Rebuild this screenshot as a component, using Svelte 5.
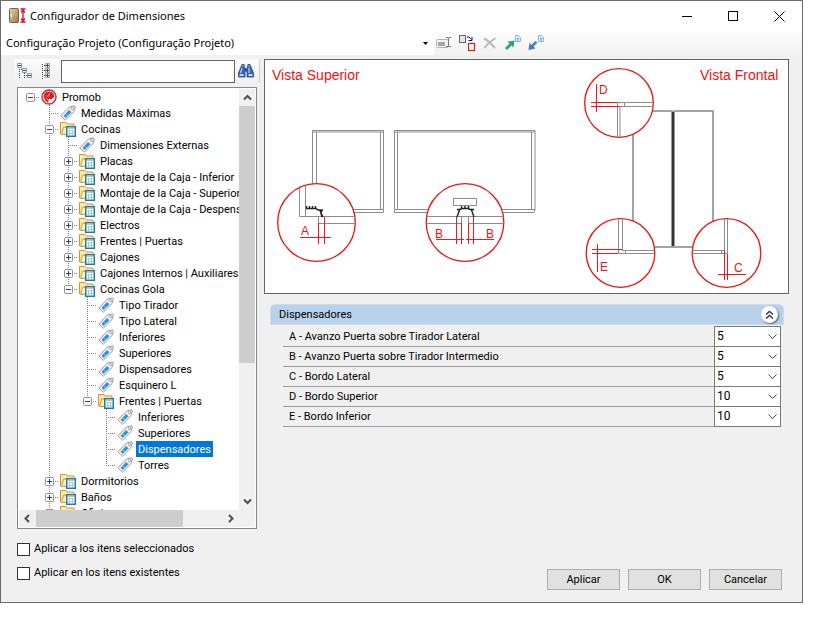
<script>
  const leaf = (name) => ({ name });
  const closed = (name) => ({ name, open: false, children: [] });

  let tree = $state([
    {
      name: 'Promob',
      open: true,
      children: [
        leaf('Medidas Máximas'),
        {
          name: 'Cocinas',
          open: true,
          children: [
            leaf('Dimensiones Externas'),
            closed('Placas'),
            closed('Montaje de la Caja - Inferior'),
            closed('Montaje de la Caja - Superior'),
            closed('Montaje de la Caja - Despens'),
            closed('Electros'),
            closed('Frentes | Puertas'),
            closed('Cajones'),
            closed('Cajones Internos | Auxiliares'),
            {
              name: 'Cocinas Gola',
              open: true,
              children: [
                leaf('Tipo Tirador'),
                leaf('Tipo Lateral'),
                leaf('Inferiores'),
                leaf('Superiores'),
                leaf('Dispensadores'),
                leaf('Esquinero L'),
                {
                  name: 'Frentes | Puertas',
                  open: true,
                  children: [
                    leaf('Inferiores'),
                    leaf('Superiores'),
                    { name: 'Dispensadores', selected: true },
                    leaf('Torres')
                  ]
                }
              ]
            }
          ]
        },
        closed('Dormitorios'),
        closed('Baños'),
        closed('Oficina')
      ]
    }
  ]);

  let fields = $state([
    { label: 'A - Avanzo Puerta sobre Tirador Lateral', value: '5' },
    { label: 'B - Avanzo Puerta sobre Tirador Intermedio', value: '5' },
    { label: 'C - Bordo Lateral', value: '5' },
    { label: 'D - Bordo Superior', value: '10' },
    { label: 'E - Bordo Inferior', value: '10' }
  ]);

  let expanded = $state(true);

  // One entry per visible row, with the guide cells drawn before its icon
  function flatten(nodes, guides = [], depth = 0) {
    return nodes.flatMap((node, i) => {
      const last = i === nodes.length - 1;
      const own = depth === 0 ? 'root' : last ? 'end' : 'tee';
      const row = { node, depth, guides, own };
      if (!node.children || !node.open) return [row];
      const next = [...guides, depth === 0 || last ? 'blank' : 'line'];
      return [row, ...flatten(node.children, next, depth + 1)];
    });
  }

  const rows = $derived(flatten(tree));
</script>

{#snippet chevron(d)}
  <svg class="chevron" width="9" height="9" viewBox="0 0 9 9" aria-hidden="true"><path {d} /></svg>
{/snippet}

{#snippet nodeIcon(row)}
  <svg class="node-icon" width="16" height="16" viewBox="0 0 16 16" aria-hidden="true">
    {#if row.depth === 0}
      <circle cx="8" cy="8" r="7" fill="#fff" stroke="#d3222c" stroke-width="1.4" />
      <path d="M7 2.500C3.500 3 2 6 3 9c.6 2.300 2.300 4 4.500 4.500V10h2c3 0 4-1.700 3.500-4C12.500 3.500 10 2 7 2.500z" fill="#d3222c" />
      <path d="M8 4v3M5.500 7H8M5 9.500l2 1" stroke="#f4a8ab" stroke-width=".8" fill="none" />
    {:else if row.node.children}
      <path d="M.5 13V1.500h5.500l1 1.500h7v3" fill="#fce9ac" stroke="#cf9434" />
      <path d="M1.500 13.500l2-7.500h11v7.500z" fill="#ffd772" stroke="#d39b3f" />
      <path d="M2.500 12.500l1.500-5.500h3v5.500z" fill="#fff1c4" />
      <rect x="6.750" y="5.750" width="8.500" height="9.500" fill="#fff" stroke="#147cb8" stroke-width="1.500" />
      <path d="M8 7.500h6" stroke="#f4b860" />
      <path d="M8.500 9.500h5M8.500 12.500h5M9.500 9v5M12.500 9v5" stroke="#9cc6e8" />
    {:else}
      <path d="M.8 10.800L9.500 2l4.800-1.200c.7 0 1 .4 1 1L14 6.700 5.300 15.200z" fill="#f4f4f4" stroke="#9a9a9a" />
      <path d="M3.500 10.800L9 5l2.500 2.300-5.800 5.700z" fill="#3391d4" />
      <path d="M5.500 9l2.500 2" stroke="#a7d5f3" stroke-width=".8" />
      <circle cx="12.500" cy="3.500" r="1.200" fill="#fff" stroke="#888" stroke-width=".8" />
    {/if}
  </svg>
{/snippet}

<div class="window">
  <header class="title-bar">
    <svg width="17" height="16" viewBox="0 0 17 16" aria-hidden="true">
      <defs>
        <linearGradient id="wood" x1="0" x2="1" y1="0" y2="1">
          <stop offset="0" stop-color="#e8d3b2" />
          <stop offset="1" stop-color="#9c7648" />
        </linearGradient>
      </defs>
      <rect x=".5" y=".5" width="9" height="14" rx="1" fill="url(#wood)" stroke="#80603c" />
      <path d="M2.500 6v3" stroke="#fff" />
      <path d="M11.500 1h5M11.500 14h5M14 2v11M12 4.500l2-2.500 2 2.500M12 10.500l2 2.500 2-2.500" fill="none" stroke="#d9122a" stroke-width="1.300" />
    </svg>
    <h1>Configurador de Dimensiones</h1>
    <div class="window-controls">
      <button aria-label="Minimizar"><svg width="11" height="11" viewBox="0 0 11 11"><path d="M0 5.500h10" /></svg></button>
      <button aria-label="Maximizar"><svg width="11" height="11" viewBox="0 0 11 11"><rect x=".5" y=".5" width="9" height="9" /></svg></button>
      <button aria-label="Cerrar"><svg width="11" height="11" viewBox="0 0 11 11"><path d="M.5.5l10 10M10.500.5l-10 10" /></svg></button>
    </div>
  </header>

  <div class="tool-bar">
    <div class="project">
      <select aria-label="Proyecto">
        <option>Configuração Projeto (Configuração Projeto)</option>
      </select>
      <svg width="5" height="3" viewBox="0 0 5 3" aria-hidden="true"><path d="M0 0h5L2.500 3z" /></svg>
    </div>
    <button aria-label="Renombrar">
      <svg width="16" height="16" viewBox="0 0 16 16">
        <rect x=".5" y="4.500" width="12" height="8" rx="1" fill="#f2f2f2" stroke="#b4b4b4" />
        <rect x="2" y="7" width="7" height="4" fill="#a6a6a6" />
        <path d="M10 2.500h2l.5.5.5-.5h2M12.500 3v8M10 11.500h2l.5-.5.5.5h2" fill="none" stroke="#777" />
      </svg>
    </button>
    <button aria-label="Duplicar">
      <svg width="16" height="16" viewBox="0 0 16 16">
        <rect x=".5" y=".5" width="6" height="7" fill="#e4e4ec" stroke="#6f5f66" />
        <path d="M8 2h2l2.500 2.500M13 2v3.500H9.500" fill="none" stroke="#10107c" />
        <rect x="9.500" y="8.500" width="6" height="7" fill="#eee" stroke="#e80c0c" />
      </svg>
    </button>
    <button aria-label="Eliminar">
      <svg width="16" height="16" viewBox="0 0 16 16">
        <path d="M2 3.500c4 2 8 6 11 9.500M13.500 3C9 6 5 9 2.500 13" fill="none" stroke="#b9b9b9" stroke-width="2" />
      </svg>
    </button>
    <button aria-label="Exportar">
      <svg width="16" height="16" viewBox="0 0 16 16">
        <path d="M0 13l4.500-4.500L2.500 6.500l7-1-1 7-2-2L2 15z" fill="#2da57b" />
        <path d="M10.500.5h3l2 2v4h-5z" fill="#e9f3ff" stroke="#8bb4e0" />
        <path d="M12 3.500h2M12 5h2" stroke="#5c93ce" />
      </svg>
    </button>
    <button aria-label="Importar">
      <svg width="16" height="16" viewBox="0 0 16 16">
        <path d="M9.500 7.500L5.500 11.500l2 2-7 1.500 1-7 2 2 4-4z" fill="#3c7dcb" />
        <path d="M10.500.5h3l2 2v4h-5z" fill="#e9f3ff" stroke="#8bb4e0" />
        <path d="M12 3.500h2M12 5h2" stroke="#5c93ce" />
      </svg>
    </button>
  </div>

  <main>
    <aside>
      <div class="search-bar">
        <button aria-label="Expandir todo">
          <svg width="16" height="16" viewBox="0 0 16 16">
            <path d="M2.500 6v10M7.500 10v6M4 6.500h2M9 12.500h1" stroke="#444" stroke-dasharray="1 1" />
            <path d="M.5.5h4v4h-4zM5.500 5.500h4v4h-4zM10.500 10.500h4v4h-4z" fill="#fff" stroke="#8798ad" />
            <path d="M1 2.500h3M6 7.500h3M11 12.500h3" stroke="#33435c" />
          </svg>
        </button>
        <button aria-label="Contraer todo">
          <svg width="16" height="16" viewBox="0 0 16 16">
            <path d="M4.500 1v15M6 2.500h1M6 7.500h1M6 12.500h1" stroke="#444" stroke-dasharray="1 1" />
            <path d="M7.500.5h4v4h-4zM7.500 5.500h4v4h-4zM7.500 10.500h4v4h-4z" fill="#fff" stroke="#a2a2a2" />
            <path d="M8 2.500h3M8 7.500h3M8 12.500h3M9.500 1v3M9.500 6v3M9.500 11v3" stroke="#444" />
          </svg>
        </button>
        <input type="text" aria-label="Buscar" />
        <button aria-label="Buscar siguiente">
          <svg width="16" height="14" viewBox="0 0 16 14">
            <path d="M4 .5h2l.5 2 .5 2v8.500H.5V9L3 3zM12 .5h-2l-.5 2-.5 2v8.500h6.500V9L13 3z" fill="#3766b2" stroke="#22468c" stroke-width=".8" />
            <path d="M7 4.500h2v3H7z" fill="#22468c" />
            <path d="M4 4L2.500 9M11 4v5M4 2h1.500M10.500 2H12" stroke="#b8d0f2" stroke-width="1.200" fill="none" />
            <path d="M1.500 11.200h4M10.500 11.200h4" stroke="#dce8fa" stroke-width="1.800" />
          </svg>
        </button>
      </div>

      <div class="tree">
        <ul>
          {#each rows as row}
            <li>
              {#each row.guides as guide}
                <span class="guide {guide}"></span>
              {/each}
              <span class="guide {row.own}">
                {#if row.node.children}
                  <button
                    class="expander"
                    aria-label={row.node.open ? 'Contraer' : 'Expandir'}
                    onclick={() => (row.node.open = !row.node.open)}
                  >
                    <svg width="9" height="9" viewBox="0 0 9 9">
                      <rect x=".5" y=".5" width="8" height="8" rx="1" />
                      <path d={row.node.open ? 'M2 4.500h5' : 'M2 4.500h5M4.500 2v5'} />
                    </svg>
                  </button>
                {/if}
              </span>
              {@render nodeIcon(row)}
              <span class="label" class:selected={row.node.selected}>{row.node.name}</span>
            </li>
          {/each}
        </ul>
        <div class="scroll vertical">
          <span class="arrow">{@render chevron('M1 6.500l3.500-3.500L8 6.500')}</span>
          <span class="thumb"></span>
          <span class="arrow">{@render chevron('M1 2.500l3.500 3.500L8 2.500')}</span>
        </div>
        <div class="scroll horizontal">
          <span class="arrow">{@render chevron('M6 1l-3.500 3.500L6 8')}</span>
          <span class="thumb"></span>
          <span class="arrow">{@render chevron('M3 1l3.500 3.500L3 8')}</span>
        </div>
      </div>

      <div class="options">
        <label><input type="checkbox" />Aplicar a los itens seleccionados</label>
        <label><input type="checkbox" />Aplicar en los itens existentes</label>
      </div>
    </aside>

    <section class="content">
      <div class="preview">
        <svg viewBox="265 60 523 233">
          <text class="view-name" x="272" y="80">Vista Superior</text>
          <text class="view-name" x="700" y="80">Vista Frontal</text>

          <!-- cabinets from above -->
          <g class="board">
            <path d="M312.500 209V130.500h71v79M313 132h70M316.500 132v78M380.500 132v78M316 209.500h67.500v3H316" />
            <path d="M394.500 209.500V130.500h140.500v79M395 132h140M397.500 132v78M531.500 132v78M394.500 209.500h140.500l-1 3H394.500z" />
          </g>

          <circle cx="316.500" cy="222.500" r="38.800" />
          <g class="board">
            <path d="M299.500 188v28.500h55.500M305.500 186v30M318.500 217v6.500h36.500" />
          </g>
          <path class="profile" d="M306 208.500h10l2 1.500h5M320 210l2 7M306.500 206v2M309.500 206v2M312.500 206v2M315.500 206v2M322 210l-1 3 2 4" />
          <path class="measure" d="M318.500 223v21M324.500 217v27M300 237.500h31" />
          <text x="301" y="235">A</text>

          <circle cx="465" cy="222.500" r="38.800" />
          <g class="board">
            <path d="M453.500 198.500h23v7h-23zM426.500 216.500h77M426.500 223.500h35v-7M503.500 223.500h-35v-7" />
          </g>
          <path class="profile" d="M457 209.500h3l2-1h6l2 1h4M459.500 210l-2.500 7M471.500 210l2.500 7M461.500 206v2M465 206v2M468.500 206v2" />
          <path class="measure" d="M456.500 217v27M461.500 223v21M468.500 223v21M473.500 217v27M436 239.500h28M466 239.500h28" />
          <text x="435" y="238">B</text>
          <text x="486" y="238">B</text>

          <!-- cabinet from the front -->
          <path class="edge" d="M633 111h40M674 111h40M633 110v137M713 110v137M633 247h80" />
          <path d="M673 111v135" stroke="#999" stroke-width="4" />
          <path d="M673 112v134" stroke="#333" stroke-width="2" />

          <circle cx="619" cy="103" r="34.300" />
          <g class="board">
            <path d="M653 102.500h-35.500v35M653 106.500h-33v31M624.500 102.500v4" />
          </g>
          <path class="measure" d="M591 102.500h26M591 106.500h29M596.500 84v28" />
          <text x="599" y="94">D</text>

          <circle cx="620.500" cy="253" r="34.300" />
          <g class="board">
            <path d="M618.500 219v34.500h36M622.500 219v31.500h32M625.500 250.500v3" />
          </g>
          <path class="measure" d="M592 249.500h30M592 253.500h26M597.500 244v28" />
          <text x="600" y="271">E</text>

          <circle cx="726.500" cy="253" r="34.300" />
          <g class="board">
            <path d="M727.500 219v34.500h-35M724.500 219v31.500h-32M721.500 250.500v3" />
          </g>
          <path class="measure" d="M724.500 250v30M727.500 254v26M718 274.500h28" />
          <text x="734" y="272">C</text>
        </svg>
      </div>

      <div class="group">
        <div class="group-header">
          <h2>Dispensadores</h2>
          <button aria-label="Mostrar u ocultar" onclick={() => (expanded = !expanded)}>
            <svg width="9" height="9" viewBox="0 0 9 9"><path d="M1 4.500l3.500-3 3.500 3M1 8.500l3.500-3 3.500 3" /></svg>
          </button>
        </div>
        {#if expanded}
          <div class="fields">
            {#each fields as field, i}
              <div class="field">
                <label for="field-{i}">{field.label}</label>
                <div class="value">
                  <select id="field-{i}" bind:value={field.value}>
                    <option>5</option>
                    <option>10</option>
                  </select>
                  <svg width="9" height="5" viewBox="0 0 9 5" aria-hidden="true"><path d="M.5.5l4 4 4-4" /></svg>
                </div>
              </div>
            {/each}
          </div>
        {/if}
      </div>

      <footer>
        <button>Aplicar</button>
        <button>OK</button>
        <button>Cancelar</button>
      </footer>
    </section>
  </main>
</div>

<style>
  :global(body) {
    background: #fff;
  }

  * {
    box-sizing: border-box;
  }

  .window {
    display: flex;
    flex-direction: column;
    height: calc(100vh - 21px);
    margin-right: 17px;
    border: 1px solid #6b6b6b;
    background: #f0f0f0;
    color: #000;
    font: 11px/16px Roboto, 'Liberation Sans', sans-serif;
  }

  button,
  input,
  select {
    margin: 0;
    padding: 0;
    border: 0;
    border-radius: 0;
    background: none;
    color: inherit;
    font: inherit;
  }

  select {
    appearance: none;
  }

  h1,
  h2 {
    margin: 0;
    font-size: inherit;
    font-weight: 400;
  }

  svg {
    display: block;
    flex: none;
  }

  .title-bar {
    display: flex;
    align-items: center;
    flex: none;
    gap: 4px;
    height: 30px;
    padding-left: 8px;
    background: #fff;
  }

  .title-bar h1 {
    flex: 1;
    font-family: 'Noto Sans', 'Open Sans', sans-serif;
    font-size: 11px;
  }

  .window-controls {
    display: flex;
  }

  .window-controls button {
    display: grid;
    place-items: center;
    width: 46px;
    height: 30px;
  }

  .window-controls svg {
    fill: none;
    stroke: #000;
  }

  .tool-bar {
    display: flex;
    align-items: center;
    flex: none;
    gap: 7px;
    height: 24px;
    background: linear-gradient(#fdfdfd, #f1f1f1);
  }

  .tool-bar button {
    width: 16px;
    height: 16px;
  }

  .project {
    display: grid;
    align-items: center;
    align-self: stretch;
    width: 54%;
    margin-right: -5px;
    background: #fff;
  }

  .project select,
  .project svg {
    grid-area: 1 / 1;
  }

  .project select {
    width: 100%;
    height: 24px;
    padding-left: 5px;
    font-family: 'Noto Sans', 'Open Sans', sans-serif;
    font-size: 11px;
  }

  .project svg {
    justify-self: end;
    margin-right: 6px;
    pointer-events: none;
  }

  main {
    display: flex;
    flex: 1;
    gap: 4px;
    min-height: 0;
    padding: 4px 13px 12px 13px;
  }

  aside {
    display: flex;
    flex-direction: column;
    flex: none;
    width: 246px;
  }

  .search-bar {
    display: flex;
    align-items: center;
    flex: none;
    height: 24px;
    padding: 0 5px 0 3px;
    border-right: 1px solid #cfcfcf;
    border-radius: 2px;
    background: linear-gradient(#fbfbfb, #f0f0f0);
  }

  .search-bar button {
    width: 16px;
    height: 16px;
  }

  .search-bar button + button {
    margin-left: 5px;
  }

  .search-bar input {
    flex: 1;
    min-width: 0;
    height: 23px;
    margin: 0 3px 0 7px;
    padding: 0 4px;
    border: 1px solid #5f5f5f;
    background: #fff;
  }

  .tree {
    display: grid;
    grid-template-columns: minmax(0, 1fr) 16px;
    grid-template-rows: minmax(0, 1fr) 17px;
    flex: 1;
    min-height: 0;
    margin: 4px 3px 0;
    padding: 1px;
    border: 1px solid #828790;
    background: #fff;
  }

  .tree ul {
    overflow: hidden;
    margin: 0;
    padding: 0 0 0 2px;
    list-style: none;
  }

  .tree li {
    display: flex;
    height: 16px;
    white-space: nowrap;
  }

  .guide {
    flex: none;
    width: 19px;
    height: 16px;
    padding: 4px 5px;
    background-repeat: no-repeat;
  }

  .line,
  .tee,
  .end,
  .root {
    --down: repeating-linear-gradient(#808080 0 1px, transparent 1px 2px);
    --across: repeating-linear-gradient(90deg, #808080 0 1px, transparent 1px 2px);
  }

  .line {
    background-image: var(--down);
    background-position: 9px 0;
    background-size: 1px 16px;
  }

  .tee,
  .end {
    background-image: var(--down), var(--across);
    background-position: 9px 0, 9px 8px;
    background-size: 1px 16px, 10px 1px;
  }

  .end {
    background-size: 1px 8px, 10px 1px;
  }

  .root {
    background-image: var(--across);
    background-position: 9px 8px;
    background-size: 10px 1px;
  }

  .expander {
    display: block;
    width: 9px;
    height: 9px;
  }

  .expander rect {
    fill: #fafafa;
    stroke: #919191;
  }

  .expander path {
    stroke: #2b3f8c;
  }

  .node-icon {
    margin: 0 3px 0 1px;
  }

  .label {
    padding: 0 2px;
    line-height: 18px;
  }

  .label.selected {
    background: #0078d7;
    color: #fff;
  }

  .scroll {
    display: flex;
    background: #f0f0f0;
  }

  .vertical {
    flex-direction: column;
  }

  .horizontal {
    grid-column: 1 / -1;
    padding-right: 16px;
  }

  .arrow {
    display: grid;
    place-items: center;
    flex: none;
    width: 17px;
    height: 17px;
  }

  .vertical .arrow {
    width: 16px;
  }

  .arrow:last-child {
    margin-top: auto;
  }

  .horizontal .arrow:last-child {
    margin: 0 0 0 auto;
  }

  .thumb {
    background: #cdcdcd;
  }

  .vertical .thumb {
    height: 61%;
  }

  .horizontal .thumb {
    width: 67%;
  }

  .chevron {
    fill: none;
    stroke: #505050;
    stroke-width: 2;
  }

  .options {
    display: grid;
    gap: 6px;
    padding: 11px 3px 8px;
    line-height: 18px;
  }

  .options label {
    display: flex;
    align-items: center;
    gap: 4px;
  }

  .options input {
    appearance: none;
    width: 13px;
    height: 13px;
    border: 1px solid #333;
    background: #fff;
  }

  .options input:checked {
    background: #0078d7;
  }

  .content {
    display: flex;
    flex-direction: column;
    flex: 1;
    min-width: 0;
  }

  .preview {
    border: 1px solid #646464;
    background: #fff;
  }

  .preview svg {
    width: 100%;
    height: auto;
    fill: none;
  }

  .preview text {
    fill: #f01010;
    font: 12px 'Liberation Sans', sans-serif;
  }

  .preview .view-name {
    font-size: 14px;
  }

  .preview circle {
    fill: #fff;
    stroke: #e81414;
    stroke-width: 1.3;
  }

  .board {
    stroke: #8c8c8c;
  }

  .edge {
    stroke: #a4a4a4;
    stroke-width: 2;
  }

  .profile {
    stroke: #222;
    stroke-width: 1.4;
  }

  .measure {
    stroke: #f01818;
  }

  .group {
    margin: 10px 5px 0 6px;
  }

  .group-header {
    display: flex;
    align-items: center;
    justify-content: space-between;
    height: 21px;
    padding: 0 5px 0 8px;
    border: 1px solid #c9dcf0;
    border-radius: 5px 5px 0 0;
    background: #b9d1ea;
  }

  .group-header button {
    display: grid;
    place-items: center;
    width: 17px;
    height: 17px;
    border-radius: 50%;
    background: #fff;
    box-shadow: 1px 1px 2px #55606e;
  }

  .group-header path {
    fill: none;
    stroke: #1f3864;
    stroke-width: 1.4;
  }

  .fields {
    margin: 2px 3px 0 13px;
  }

  .field {
    display: flex;
    height: 20px;
    border-bottom: 1px solid #a0a0a0;
  }

  .field label {
    flex: 1;
    padding: 2px 6px;
  }

  .value {
    display: grid;
    align-items: center;
    width: 67px;
    height: 21px;
    margin-top: -1px;
  }

  .value select,
  .value svg {
    grid-area: 1 / 1;
  }

  .value select {
    width: 100%;
    height: 21px;
    padding: 0 2px 2px;
    border: 1px solid #7a7a7a;
    background: #fff;
    font-size: 12px;
  }

  .value svg {
    justify-self: end;
    margin-right: 4px;
    fill: none;
    stroke: #444;
    pointer-events: none;
  }

  footer {
    display: flex;
    justify-content: flex-end;
    gap: 8px;
    margin-top: auto;
    padding-right: 7px;
  }

  footer button {
    width: 73px;
    height: 21px;
    border: 1px solid #adadad;
    background: #e1e1e1;
  }
</style>
